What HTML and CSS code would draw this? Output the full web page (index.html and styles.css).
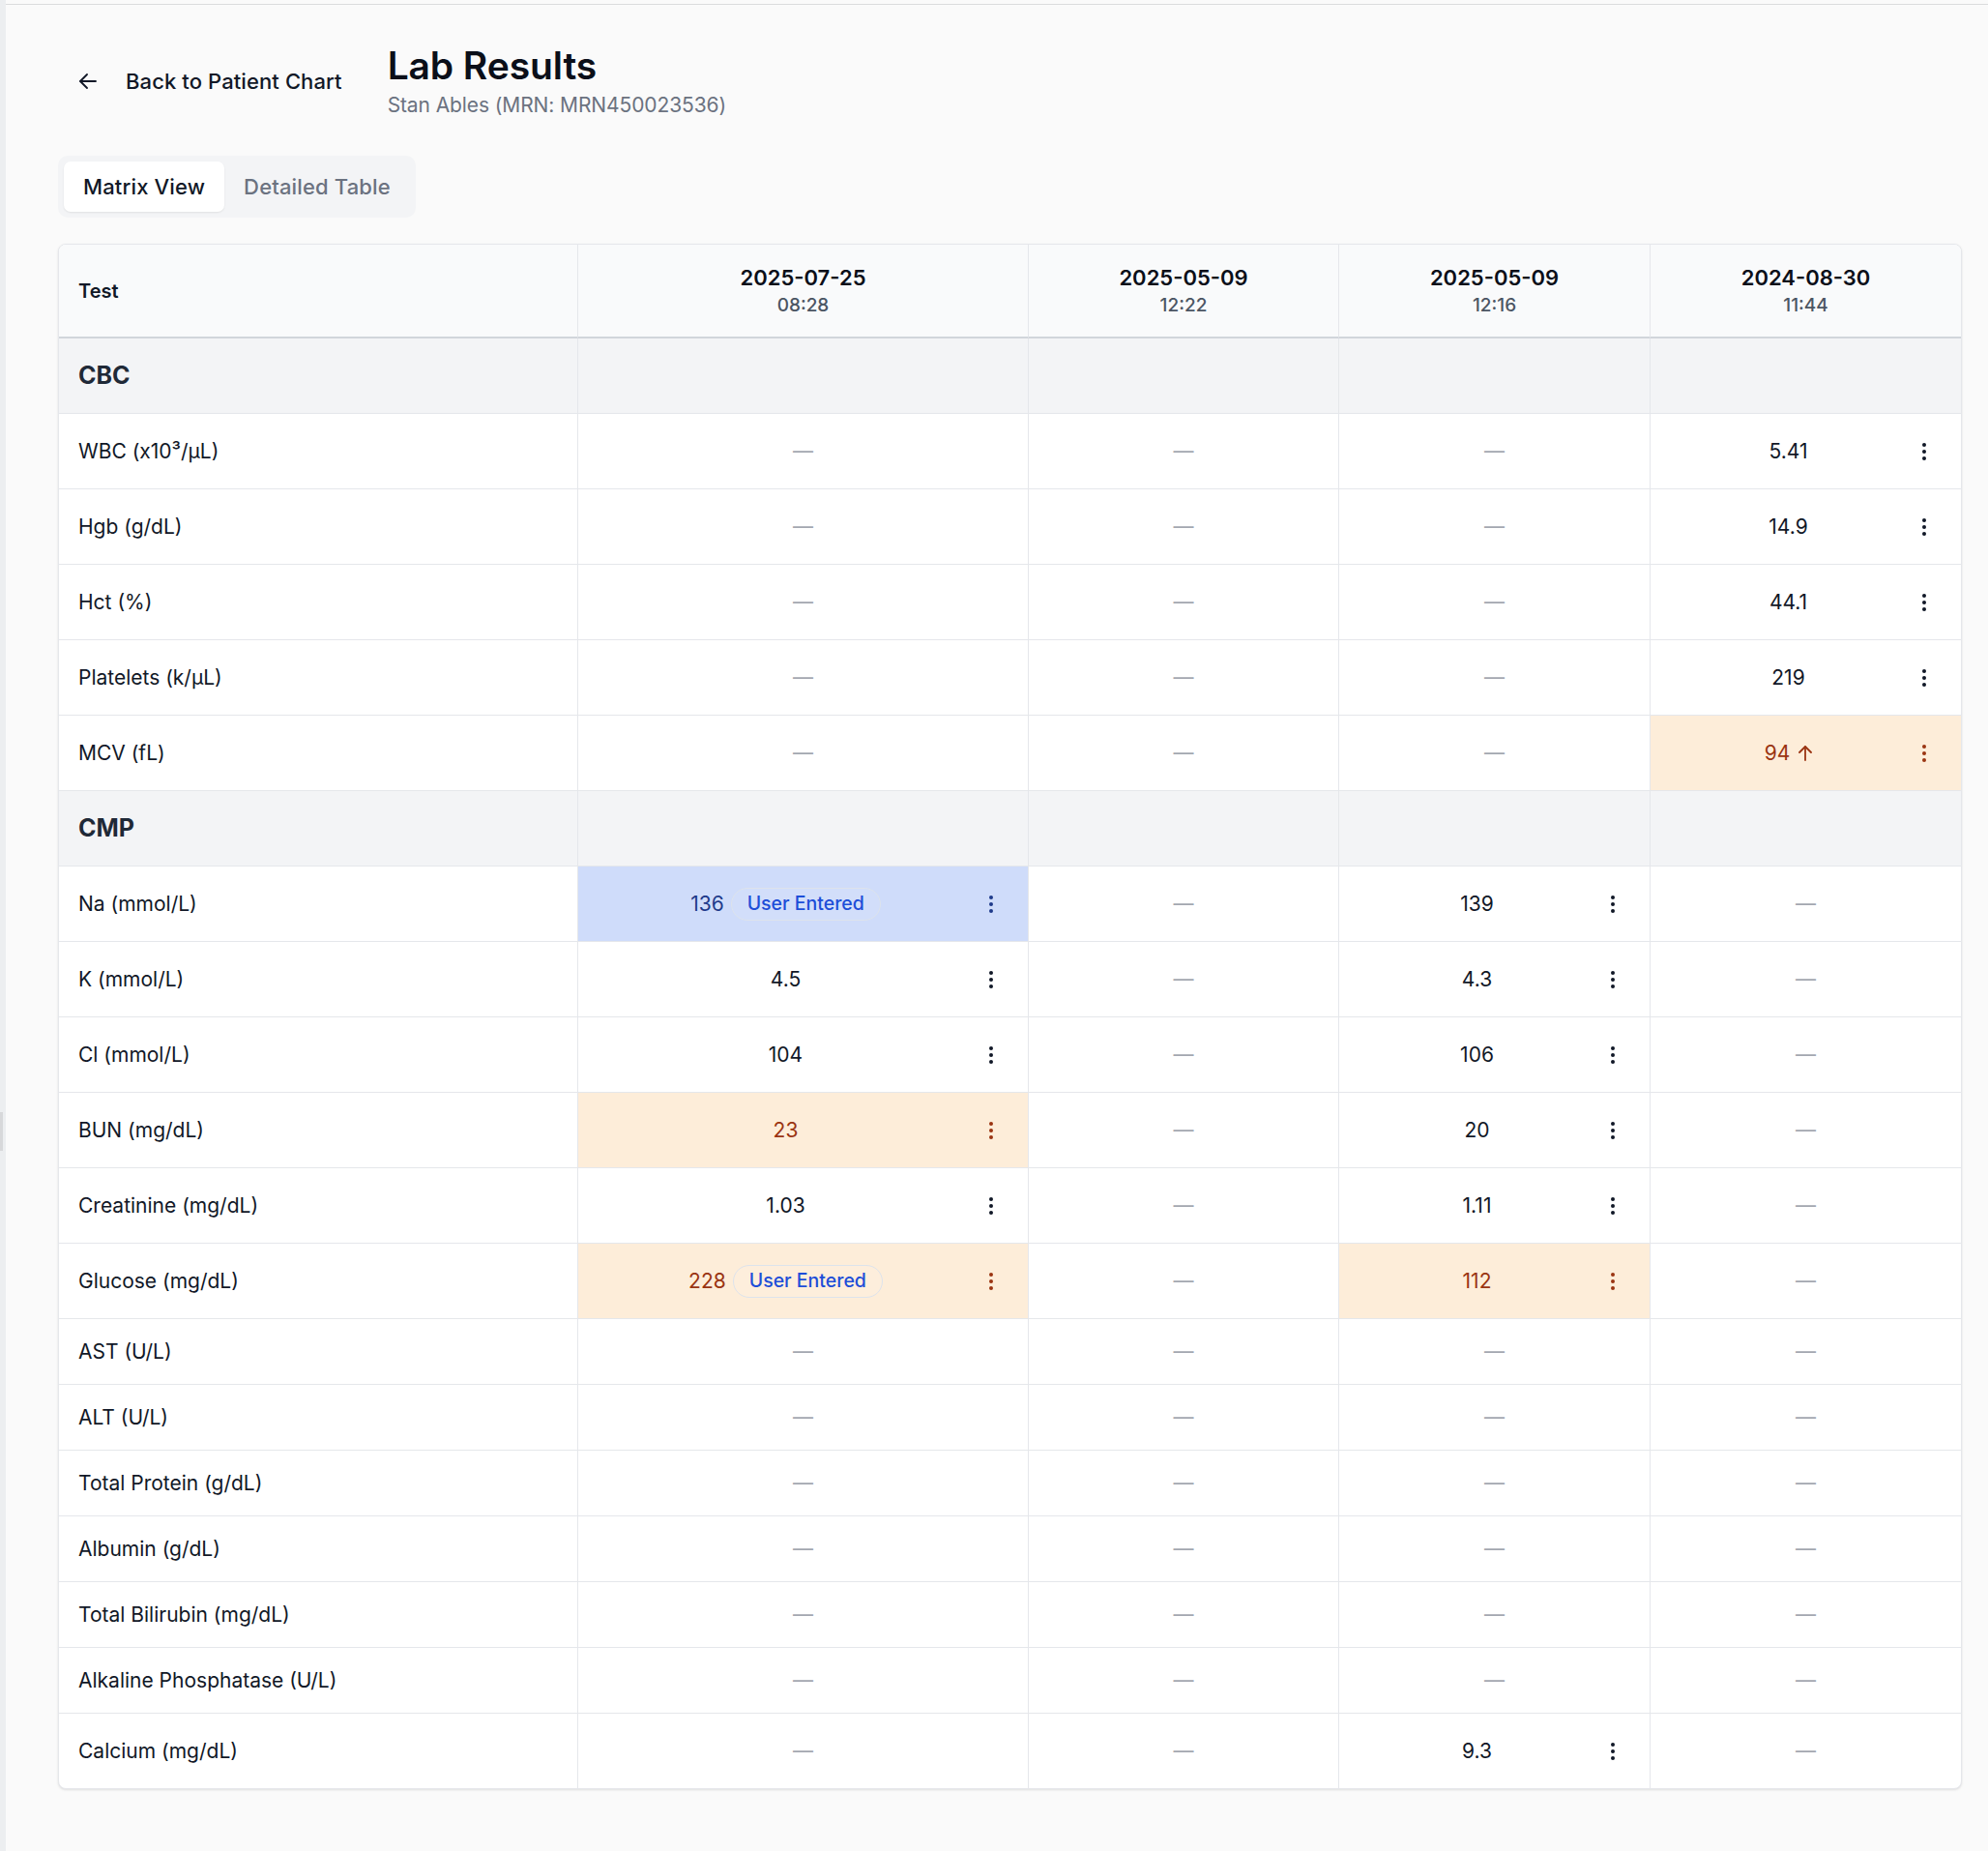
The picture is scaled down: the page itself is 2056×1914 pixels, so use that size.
FILE: index.html
```html
<!DOCTYPE html>
<html lang="en">
<head>
<meta charset="utf-8">
<title>Lab Results</title>
<link rel="stylesheet" href="styles.css">
</head>
<body>
<div class="app">
  <div class="rail"><div class="rail-thumb"></div></div>
  <div class="main">
    <div class="topline"></div>
    <div class="content">
      <header class="page-header">
        <button class="back-btn" type="button">
          <svg class="back-icon" width="18" height="16" viewBox="0 0 18 16" fill="none" stroke="currentColor" stroke-width="1.8" stroke-linecap="round" stroke-linejoin="round"><path d="M17 8H1.2"/><path d="M8 1L1 8l7 7"/></svg>
          <span>Back to Patient Chart</span>
        </button>
        <div class="title-block">
          <h1 class="title">Lab Results</h1>
          <div class="subtitle">Stan Ables (MRN: MRN450023536)</div>
        </div>
      </header>

      <div class="tabs">
        <button class="tab tab-active" type="button">Matrix View</button>
        <button class="tab" type="button">Detailed Table</button>
      </div>

      <div class="card">
        <table class="matrix">
          <colgroup>
            <col class="c-test"><col class="c-1"><col class="c-2"><col class="c-3"><col class="c-4">
          </colgroup>
          <thead>
            <tr>
              <th class="th-test">Test</th>
              <th class="th-date"><div class="date">2025-07-25</div><div class="time">08:28</div></th>
              <th class="th-date"><div class="date">2025-05-09</div><div class="time">12:22</div></th>
              <th class="th-date"><div class="date">2025-05-09</div><div class="time">12:16</div></th>
              <th class="th-date"><div class="date">2024-08-30</div><div class="time">11:44</div></th>
            </tr>
          </thead>
          <tbody>
            <tr class="group">
              <td class="label"><span class="group-label">CBC</span></td><td></td><td></td><td></td><td></td>
            </tr>
            <tr>
              <td class="label">WBC (x10³/µL)</td>
              <td class="cell"><span class="dash">—</span></td>
              <td class="cell"><span class="dash">—</span></td>
              <td class="cell"><span class="dash">—</span></td>
              <td class="cell"><div class="val"><div class="val-main"><span>5.41</span></div><button class="kebab" type="button"><svg width="24" height="24" viewBox="0 0 24 24" fill="currentColor"><circle cx="12" cy="5" r="2"/><circle cx="12" cy="12" r="2"/><circle cx="12" cy="19" r="2"/></svg></button></div></td>
            </tr>
            <tr>
              <td class="label">Hgb (g/dL)</td>
              <td class="cell"><span class="dash">—</span></td>
              <td class="cell"><span class="dash">—</span></td>
              <td class="cell"><span class="dash">—</span></td>
              <td class="cell"><div class="val"><div class="val-main"><span>14.9</span></div><button class="kebab" type="button"><svg width="24" height="24" viewBox="0 0 24 24" fill="currentColor"><circle cx="12" cy="5" r="2"/><circle cx="12" cy="12" r="2"/><circle cx="12" cy="19" r="2"/></svg></button></div></td>
            </tr>
            <tr>
              <td class="label">Hct (%)</td>
              <td class="cell"><span class="dash">—</span></td>
              <td class="cell"><span class="dash">—</span></td>
              <td class="cell"><span class="dash">—</span></td>
              <td class="cell"><div class="val"><div class="val-main"><span>44.1</span></div><button class="kebab" type="button"><svg width="24" height="24" viewBox="0 0 24 24" fill="currentColor"><circle cx="12" cy="5" r="2"/><circle cx="12" cy="12" r="2"/><circle cx="12" cy="19" r="2"/></svg></button></div></td>
            </tr>
            <tr>
              <td class="label">Platelets (k/µL)</td>
              <td class="cell"><span class="dash">—</span></td>
              <td class="cell"><span class="dash">—</span></td>
              <td class="cell"><span class="dash">—</span></td>
              <td class="cell"><div class="val"><div class="val-main"><span>219</span></div><button class="kebab" type="button"><svg width="24" height="24" viewBox="0 0 24 24" fill="currentColor"><circle cx="12" cy="5" r="2"/><circle cx="12" cy="12" r="2"/><circle cx="12" cy="19" r="2"/></svg></button></div></td>
            </tr>
            <tr>
              <td class="label">MCV (fL)</td>
              <td class="cell"><span class="dash">—</span></td>
              <td class="cell"><span class="dash">—</span></td>
              <td class="cell"><span class="dash">—</span></td>
              <td class="cell flag-high"><div class="val"><div class="val-main"><span>94</span><svg class="up-icon" width="14" height="16" viewBox="0 0 14 16" fill="none" stroke="currentColor" stroke-width="1.8" stroke-linecap="round" stroke-linejoin="round"><path d="M7 15V1.2"/><path d="M1 7l6-6 6 6"/></svg></div><button class="kebab" type="button"><svg width="24" height="24" viewBox="0 0 24 24" fill="currentColor"><circle cx="12" cy="5" r="2"/><circle cx="12" cy="12" r="2"/><circle cx="12" cy="19" r="2"/></svg></button></div></td>
            </tr>
            <tr class="group">
              <td class="label"><span class="group-label">CMP</span></td><td></td><td></td><td></td><td></td>
            </tr>
            <tr>
              <td class="label">Na (mmol/L)</td>
              <td class="cell user"><div class="val"><div class="val-main"><span>136</span><span class="badge">User Entered</span></div><button class="kebab" type="button"><svg width="24" height="24" viewBox="0 0 24 24" fill="currentColor"><circle cx="12" cy="5" r="2"/><circle cx="12" cy="12" r="2"/><circle cx="12" cy="19" r="2"/></svg></button></div></td>
              <td class="cell"><span class="dash">—</span></td>
              <td class="cell"><div class="val"><div class="val-main"><span>139</span></div><button class="kebab" type="button"><svg width="24" height="24" viewBox="0 0 24 24" fill="currentColor"><circle cx="12" cy="5" r="2"/><circle cx="12" cy="12" r="2"/><circle cx="12" cy="19" r="2"/></svg></button></div></td>
              <td class="cell"><span class="dash">—</span></td>
            </tr>
            <tr>
              <td class="label">K (mmol/L)</td>
              <td class="cell"><div class="val"><div class="val-main"><span>4.5</span></div><button class="kebab" type="button"><svg width="24" height="24" viewBox="0 0 24 24" fill="currentColor"><circle cx="12" cy="5" r="2"/><circle cx="12" cy="12" r="2"/><circle cx="12" cy="19" r="2"/></svg></button></div></td>
              <td class="cell"><span class="dash">—</span></td>
              <td class="cell"><div class="val"><div class="val-main"><span>4.3</span></div><button class="kebab" type="button"><svg width="24" height="24" viewBox="0 0 24 24" fill="currentColor"><circle cx="12" cy="5" r="2"/><circle cx="12" cy="12" r="2"/><circle cx="12" cy="19" r="2"/></svg></button></div></td>
              <td class="cell"><span class="dash">—</span></td>
            </tr>
            <tr>
              <td class="label">Cl (mmol/L)</td>
              <td class="cell"><div class="val"><div class="val-main"><span>104</span></div><button class="kebab" type="button"><svg width="24" height="24" viewBox="0 0 24 24" fill="currentColor"><circle cx="12" cy="5" r="2"/><circle cx="12" cy="12" r="2"/><circle cx="12" cy="19" r="2"/></svg></button></div></td>
              <td class="cell"><span class="dash">—</span></td>
              <td class="cell"><div class="val"><div class="val-main"><span>106</span></div><button class="kebab" type="button"><svg width="24" height="24" viewBox="0 0 24 24" fill="currentColor"><circle cx="12" cy="5" r="2"/><circle cx="12" cy="12" r="2"/><circle cx="12" cy="19" r="2"/></svg></button></div></td>
              <td class="cell"><span class="dash">—</span></td>
            </tr>
            <tr>
              <td class="label">BUN (mg/dL)</td>
              <td class="cell flag-high"><div class="val"><div class="val-main"><span>23</span></div><button class="kebab" type="button"><svg width="24" height="24" viewBox="0 0 24 24" fill="currentColor"><circle cx="12" cy="5" r="2"/><circle cx="12" cy="12" r="2"/><circle cx="12" cy="19" r="2"/></svg></button></div></td>
              <td class="cell"><span class="dash">—</span></td>
              <td class="cell"><div class="val"><div class="val-main"><span>20</span></div><button class="kebab" type="button"><svg width="24" height="24" viewBox="0 0 24 24" fill="currentColor"><circle cx="12" cy="5" r="2"/><circle cx="12" cy="12" r="2"/><circle cx="12" cy="19" r="2"/></svg></button></div></td>
              <td class="cell"><span class="dash">—</span></td>
            </tr>
            <tr>
              <td class="label">Creatinine (mg/dL)</td>
              <td class="cell"><div class="val"><div class="val-main"><span>1.03</span></div><button class="kebab" type="button"><svg width="24" height="24" viewBox="0 0 24 24" fill="currentColor"><circle cx="12" cy="5" r="2"/><circle cx="12" cy="12" r="2"/><circle cx="12" cy="19" r="2"/></svg></button></div></td>
              <td class="cell"><span class="dash">—</span></td>
              <td class="cell"><div class="val"><div class="val-main"><span>1.11</span></div><button class="kebab" type="button"><svg width="24" height="24" viewBox="0 0 24 24" fill="currentColor"><circle cx="12" cy="5" r="2"/><circle cx="12" cy="12" r="2"/><circle cx="12" cy="19" r="2"/></svg></button></div></td>
              <td class="cell"><span class="dash">—</span></td>
            </tr>
            <tr>
              <td class="label">Glucose (mg/dL)</td>
              <td class="cell flag-high"><div class="val"><div class="val-main"><span>228</span><span class="badge">User Entered</span></div><button class="kebab" type="button"><svg width="24" height="24" viewBox="0 0 24 24" fill="currentColor"><circle cx="12" cy="5" r="2"/><circle cx="12" cy="12" r="2"/><circle cx="12" cy="19" r="2"/></svg></button></div></td>
              <td class="cell"><span class="dash">—</span></td>
              <td class="cell flag-high"><div class="val"><div class="val-main"><span>112</span></div><button class="kebab" type="button"><svg width="24" height="24" viewBox="0 0 24 24" fill="currentColor"><circle cx="12" cy="5" r="2"/><circle cx="12" cy="12" r="2"/><circle cx="12" cy="19" r="2"/></svg></button></div></td>
              <td class="cell"><span class="dash">—</span></td>
            </tr>
            <tr>
              <td class="label">AST (U/L)</td>
              <td class="cell"><span class="dash">—</span></td>
              <td class="cell"><span class="dash">—</span></td>
              <td class="cell"><span class="dash">—</span></td>
              <td class="cell"><span class="dash">—</span></td>
            </tr>
            <tr>
              <td class="label">ALT (U/L)</td>
              <td class="cell"><span class="dash">—</span></td>
              <td class="cell"><span class="dash">—</span></td>
              <td class="cell"><span class="dash">—</span></td>
              <td class="cell"><span class="dash">—</span></td>
            </tr>
            <tr>
              <td class="label">Total Protein (g/dL)</td>
              <td class="cell"><span class="dash">—</span></td>
              <td class="cell"><span class="dash">—</span></td>
              <td class="cell"><span class="dash">—</span></td>
              <td class="cell"><span class="dash">—</span></td>
            </tr>
            <tr>
              <td class="label">Albumin (g/dL)</td>
              <td class="cell"><span class="dash">—</span></td>
              <td class="cell"><span class="dash">—</span></td>
              <td class="cell"><span class="dash">—</span></td>
              <td class="cell"><span class="dash">—</span></td>
            </tr>
            <tr>
              <td class="label">Total Bilirubin (mg/dL)</td>
              <td class="cell"><span class="dash">—</span></td>
              <td class="cell"><span class="dash">—</span></td>
              <td class="cell"><span class="dash">—</span></td>
              <td class="cell"><span class="dash">—</span></td>
            </tr>
            <tr>
              <td class="label">Alkaline Phosphatase (U/L)</td>
              <td class="cell"><span class="dash">—</span></td>
              <td class="cell"><span class="dash">—</span></td>
              <td class="cell"><span class="dash">—</span></td>
              <td class="cell"><span class="dash">—</span></td>
            </tr>
            <tr class="last">
              <td class="label">Calcium (mg/dL)</td>
              <td class="cell"><span class="dash">—</span></td>
              <td class="cell"><span class="dash">—</span></td>
              <td class="cell"><div class="val"><div class="val-main"><span>9.3</span></div><button class="kebab" type="button"><svg width="24" height="24" viewBox="0 0 24 24" fill="currentColor"><circle cx="12" cy="5" r="2"/><circle cx="12" cy="12" r="2"/><circle cx="12" cy="19" r="2"/></svg></button></div></td>
              <td class="cell"><span class="dash">—</span></td>
            </tr>
          </tbody>
        </table>
      </div>
    </div>
  </div>
</div>
</body>
</html>
```

FILE: styles.css
```css
* { box-sizing: border-box; }

html, body { margin: 0; padding: 0; }

body {
  background: #fafafa;
  font-family: Inter, "Noto Sans", "Liberation Sans", sans-serif;
  color: #111827;
}

button { font-family: inherit; }

.app {
  display: flex;
  min-height: 1914px;
}

.rail {
  width: 6px;
  flex: none;
  background: #eceef0;
}

.rail-thumb {
  width: 3px;
  height: 40px;
  margin-top: 1150px;
  background: #d7d8da;
}

.main {
  flex: 1;
  min-width: 0;
}

.topline {
  height: 5px;
  border-bottom: 1px solid #dadbdd;
}

.content {
  padding: 0 27px 60px 54px;
}

/* Header */
.page-header {
  display: flex;
  align-items: center;
  gap: 31px;
  padding-top: 39px;
}

.back-btn {
  display: flex;
  align-items: center;
  gap: 30px;
  padding: 8px 16px 8px 22px;
  border: 0;
  background: transparent;
  color: #111827;
  font-size: 22px;
  font-weight: 500;
  line-height: 28px;
  letter-spacing: 0.1px;
  cursor: pointer;
}

.back-icon { flex: none; display: block; }

.title-block {
  display: flex;
  flex-direction: column;
  gap: 3px;
}

.title {
  margin: 0;
  font-size: 39px;
  line-height: 47px;
  font-weight: 600;
  color: #0b0f19;
  letter-spacing: -0.1px;
}

.subtitle {
  font-size: 21px;
  line-height: 29px;
  color: #6b7280;
  letter-spacing: -0.1px;
}

/* Tabs */
.tabs {
  display: inline-flex;
  margin-top: 38px;
  padding: 6px 6px;
  background: #f3f4f6;
  border-radius: 10px;
}

.tab {
  border: 0;
  background: transparent;
  padding: 11px 20px;
  font-size: 22px;
  line-height: 30px;
  font-weight: 500;
  letter-spacing: 0.15px;
  color: #6b7280;
  border-radius: 7px;
  cursor: pointer;
}

.tab-active {
  background: #ffffff;
  color: #111827;
  box-shadow: 0 1px 2px rgba(0, 0, 0, 0.08);
}

/* Table card */
.card {
  margin-top: 27px;
  background: #ffffff;
  border: 1px solid #e5e7eb;
  border-radius: 8px;
  box-shadow: 0 1px 3px rgba(0, 0, 0, 0.08), 0 1px 2px rgba(0, 0, 0, 0.04);
  overflow: hidden;
}

.matrix {
  width: 100%;
  table-layout: fixed;
  border-collapse: separate;
  border-spacing: 0;
}

.c-test { width: 536px; }
.c-1 { width: 466px; }
.c-2 { width: 321px; }
.c-3 { width: 322px; }
.c-4 { width: auto; }

.matrix th,
.matrix td {
  border-bottom: 1px solid #e5e7eb;
  border-left: 1px solid #e5e7eb;
  padding: 20px 20px;
  vertical-align: middle;
}

.matrix th:first-child,
.matrix td:first-child {
  border-left: 0;
}

.matrix thead th {
  background: #f9fafb;
  border-bottom: 2px solid #d1d5db;
  padding: 20px 20px 19px;
}

.th-test {
  text-align: left;
  font-size: 20px;
  font-weight: 600;
  color: #111827;
}

.th-date { text-align: center; }

.date {
  font-size: 22px;
  line-height: 29px;
  font-weight: 600;
  color: #0b0f19;
}

.time {
  font-size: 19px;
  line-height: 27px;
  font-weight: 500;
  color: #4b5563;
}

.group td {
  background: #f3f4f6;
}

.group-label {
  display: block;
  font-size: 25px;
  line-height: 37px;
  font-weight: 700;
  color: #1f2937;
}

.label {
  font-size: 21px;
  line-height: 27px;
  color: #111827;
}

.last td { border-bottom: 0; }

.cell {
  text-align: center;
  font-size: 21px;
  line-height: 27px;
  color: #111827;
}

.dash {
  color: #a3a7b0;
}

.val {
  display: flex;
  align-items: center;
  height: 37px;
}

.val-main {
  flex: 1;
  display: flex;
  align-items: center;
  justify-content: center;
  gap: 7px;
}

.kebab {
  flex: none;
  width: 36px;
  height: 37px;
  display: flex;
  align-items: center;
  justify-content: center;
  padding: 0;
  border: 0;
  background: transparent;
  color: inherit;
  cursor: pointer;
}

.kebab svg { display: block; }

.up-icon { display: block; margin-left: 2px; }

.flag-high {
  background: #fdedd9;
  color: #9a3412;
}

.user {
  background: #cfdcfa;
  color: #1e3a8a;
}

.badge {
  display: inline-block;
  height: 34px;
  padding: 0 16px;
  border: 1.5px solid #dde3ec;
  border-radius: 999px;
  font-size: 19.5px;
  line-height: 31px;
  font-weight: 500;
  color: #1d4ed8;
  background: rgba(255, 255, 255, 0.08);
}
```
